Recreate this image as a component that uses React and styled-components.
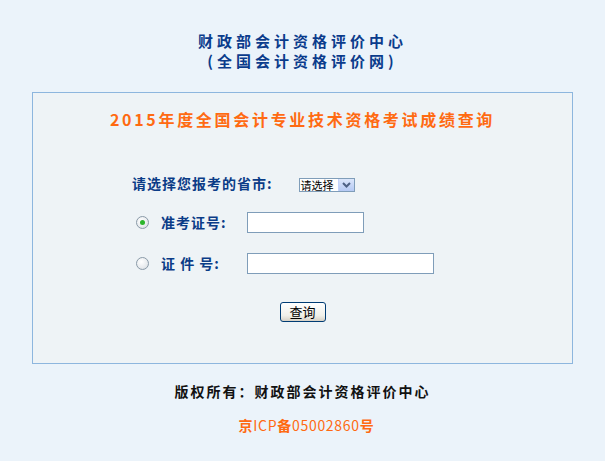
import React from "react";
import styled, { createGlobalStyle } from "styled-components";

const GlobalStyle = createGlobalStyle`
  html, body {
    margin: 0;
    padding: 0;
    background: #ebf3fa;
  }
  body {
    font-family: "Noto Sans CJK SC", "DejaVu Sans", sans-serif;
  }
`;

const Page = styled.div`
  width: 605px;
  height: 461px;
  display: flex;
  flex-direction: column;
  align-items: center;
  padding-top: 31px;
  box-sizing: border-box;
`;

const Header = styled.div`
  color: #0b3c8c;
  font-size: 15px;
  font-weight: bold;
  letter-spacing: 4px;
  line-height: 20px;
  text-align: center;
`;

const Panel = styled.div`
  margin-top: 21px;
  width: 541px;
  height: 272px;
  box-sizing: border-box;
  border: 1px solid #8db6de;
  background: #eef3f6;
  display: flex;
  flex-direction: column;
  align-items: center;
`;

const Title = styled.div`
  margin-top: 14px;
  color: #ff6a12;
  font-size: 16px;
  font-weight: bold;
  letter-spacing: 2.7px;
  line-height: 24px;
`;

const Form = styled.div`
  align-self: flex-start;
  margin-left: 99px;
  margin-top: 41px;
  display: flex;
  flex-direction: column;
`;

const Row = styled.div`
  display: flex;
  align-items: center;
  height: 22px;
  margin-top: ${(p) => p.$gap || 0}px;
`;

const Label = styled.span`
  color: #0b3c87;
  font-size: 14px;
  font-weight: bold;
  letter-spacing: 1px;
  white-space: pre;
  width: ${(p) => (p.$w ? `${p.$w}px` : "auto")};
`;

const Radio = styled.span`
  width: 11px;
  height: 11px;
  border-radius: 50%;
  border: 1px solid #8a9aa8;
  background: radial-gradient(circle at 40% 35%, #ffffff 0%, #e8ebee 60%, #cfd5da 100%);
  display: flex;
  align-items: center;
  justify-content: center;
  margin: 0 12px 0 4px;
  &::after {
    content: "";
    width: 5px;
    height: 5px;
    border-radius: 50%;
    background: ${(p) => (p.$checked ? "#2bb52b" : "transparent")};
  }
`;

const Input = styled.div`
  width: ${(p) => p.$w}px;
  height: 21px;
  box-sizing: border-box;
  border: 1px solid #7f9db9;
  background: #ffffff;
`;

const Select = styled.div`
  margin-left: 26px;
  margin-top: 4px;
  width: 56px;
  height: 14px;
  box-sizing: border-box;
  border: 1px solid #7f9db9;
  background: #fff;
  display: flex;
  align-items: center;
`;

const SelectText = styled.span`
  flex: 1;
  font-size: 11px;
  line-height: 12px;
  color: #000;
  white-space: nowrap;
  padding-left: 1px;
`;

const Arrow = styled.span`
  width: 15px;
  height: 12px;
  background: linear-gradient(#dbe6fb, #b5c9f4);
  border-left: 1px solid #c3d3fd;
  display: flex;
  align-items: center;
  justify-content: center;
`;

const ButtonRow = styled.div`
  align-self: center;
  margin-top: 24px;
`;

const Button = styled.button`
  width: 46px;
  height: 20px;
  padding: 0;
  border: 1px solid #003c74;
  border-radius: 3px;
  background: linear-gradient(#ffffff, #f0f0ea 70%, #d6d0c5);
  font-family: "Noto Sans CJK SC", sans-serif;
  font-size: 13px;
  line-height: 16px;
  color: #000;
`;

const Copyright = styled.div`
  margin-top: 17px;
  color: #111;
  font-size: 14px;
  font-weight: bold;
  letter-spacing: 2px;
  line-height: 20px;
`;

const Icp = styled.div`
  margin-top: 14px;
  padding-left: 8px;
  color: #ff6a12;
  font-size: 14px;
  letter-spacing: 0.7px;
  line-height: 20px;
  b {
    font-weight: bold;
  }
`;

export default function App() {
  return (
    <>
      <GlobalStyle />
      <Page>
        <Header>
          财政部会计资格评价中心
          <br />
          (全国会计资格评价网)
        </Header>
        <Panel>
          <Title>2015年度全国会计专业技术资格考试成绩查询</Title>
          <Form>
            <Row>
              <Label>请选择您报考的省市:</Label>
              <Select>
                <SelectText>请选择</SelectText>
                <Arrow>
                  <svg width="9" height="6" viewBox="0 0 9 6">
                    <path d="M1 1 L4.5 4.5 L8 1" fill="none" stroke="#4d6185" strokeWidth="2" />
                  </svg>
                </Arrow>
              </Select>
            </Row>
            <Row $gap={17}>
              <Radio $checked />
              <Label $w={86}>准考证号:</Label>
              <Input $w={117} />
            </Row>
            <Row $gap={19}>
              <Radio />
              <Label $w={86}>证 件 号:</Label>
              <Input $w={187} />
            </Row>
          </Form>
          <ButtonRow>
            <Button>查询</Button>
          </ButtonRow>
        </Panel>
        <Copyright>版权所有：财政部会计资格评价中心</Copyright>
        <Icp>
          <b>京</b>ICP<b>备</b>05002860<b>号</b>
        </Icp>
      </Page>
    </>
  );
}
